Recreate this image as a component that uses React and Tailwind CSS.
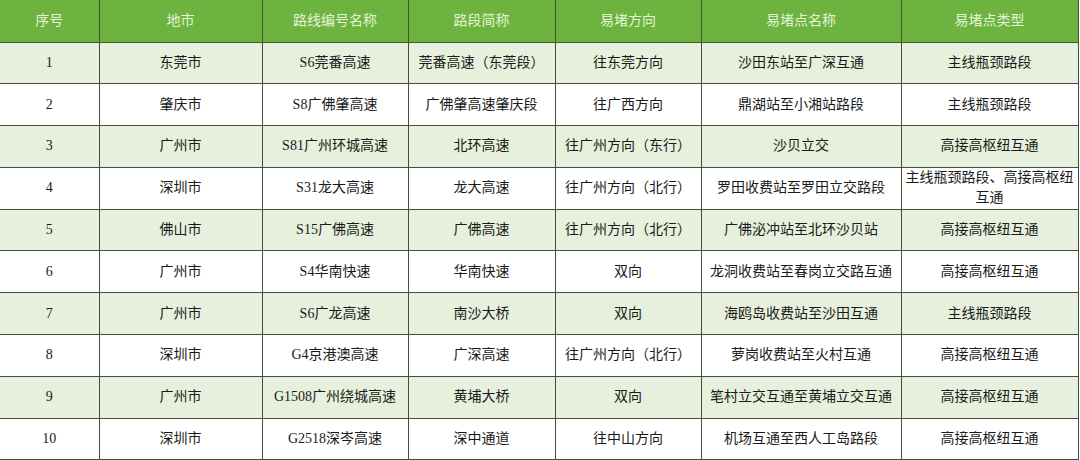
import React from 'react'

const headers = ['序号', '地市', '路线编号名称', '路段简称', '易堵方向', '易堵点名称', '易堵点类型']
const widths = ['w-[99px]', 'w-[163px]', 'w-[146px]', 'w-[147px]', 'w-[146px]', 'w-[200px]', 'w-[177px]']

const rows = [
  ['1', '东莞市', 'S6莞番高速', '莞番高速（东莞段）', '往东莞方向', '沙田东站至广深互通', '主线瓶颈路段'],
  ['2', '肇庆市', 'S8广佛肇高速', '广佛肇高速肇庆段', '往广西方向', '鼎湖站至小湘站路段', '主线瓶颈路段'],
  ['3', '广州市', 'S81广州环城高速', '北环高速', '往广州方向（东行）', '沙贝立交', '高接高枢纽互通'],
  ['4', '深圳市', 'S31龙大高速', '龙大高速', '往广州方向（北行）', '罗田收费站至罗田立交路段', '主线瓶颈路段、高接高枢纽互通'],
  ['5', '佛山市', 'S15广佛高速', '广佛高速', '往广州方向（北行）', '广佛泌冲站至北环沙贝站', '高接高枢纽互通'],
  ['6', '广州市', 'S4华南快速', '华南快速', '双向', '龙洞收费站至春岗立交路互通', '高接高枢纽互通'],
  ['7', '广州市', 'S6广龙高速', '南沙大桥', '双向', '海鸥岛收费站至沙田互通', '主线瓶颈路段'],
  ['8', '深圳市', 'G4京港澳高速', '广深高速', '往广州方向（北行）', '萝岗收费站至火村互通', '高接高枢纽互通'],
  ['9', '广州市', 'G1508广州绕城高速', '黄埔大桥', '双向', '笔村立交互通至黄埔立交互通', '高接高枢纽互通'],
  ['10', '深圳市', 'G2518深岑高速', '深中通道', '往中山方向', '机场互通至西人工岛路段', '高接高枢纽互通'],
]

export default function App() {
  return (
    <div className="w-[1080px] h-[460px] overflow-hidden bg-white">
      <table
        className="table-fixed border-collapse w-[1078px] text-[14px] text-[#1a1a1a]"
        style={{ fontFamily: '"Liberation Serif", "Noto Sans CJK SC", serif' }}
      >
        <colgroup>
          {widths.map((w, i) => (
            <col key={i} className={w} />
          ))}
        </colgroup>
        <thead>
          <tr className="h-[42px] bg-[#6db33f]">
            {headers.map((h, i) => (
              <th
                key={i}
                className="border border-[#3f5534] border-t-0 border-l-0 font-normal text-[#e6f4d6] px-1"
              >
                {h}
              </th>
            ))}
          </tr>
        </thead>
        <tbody>
          {rows.map((r, ri) => (
            <tr key={ri} className={'h-[41.8px] ' + (ri % 2 === 0 ? 'bg-[#e6f0dc]' : 'bg-white')}>
              {r.map((c, ci) => (
                <td
                  key={ci}
                  className="border border-[#444c40] border-l-0 text-center px-1 leading-[20px] align-middle"
                >
                  {c}
                </td>
              ))}
            </tr>
          ))}
        </tbody>
      </table>
    </div>
  )
}
